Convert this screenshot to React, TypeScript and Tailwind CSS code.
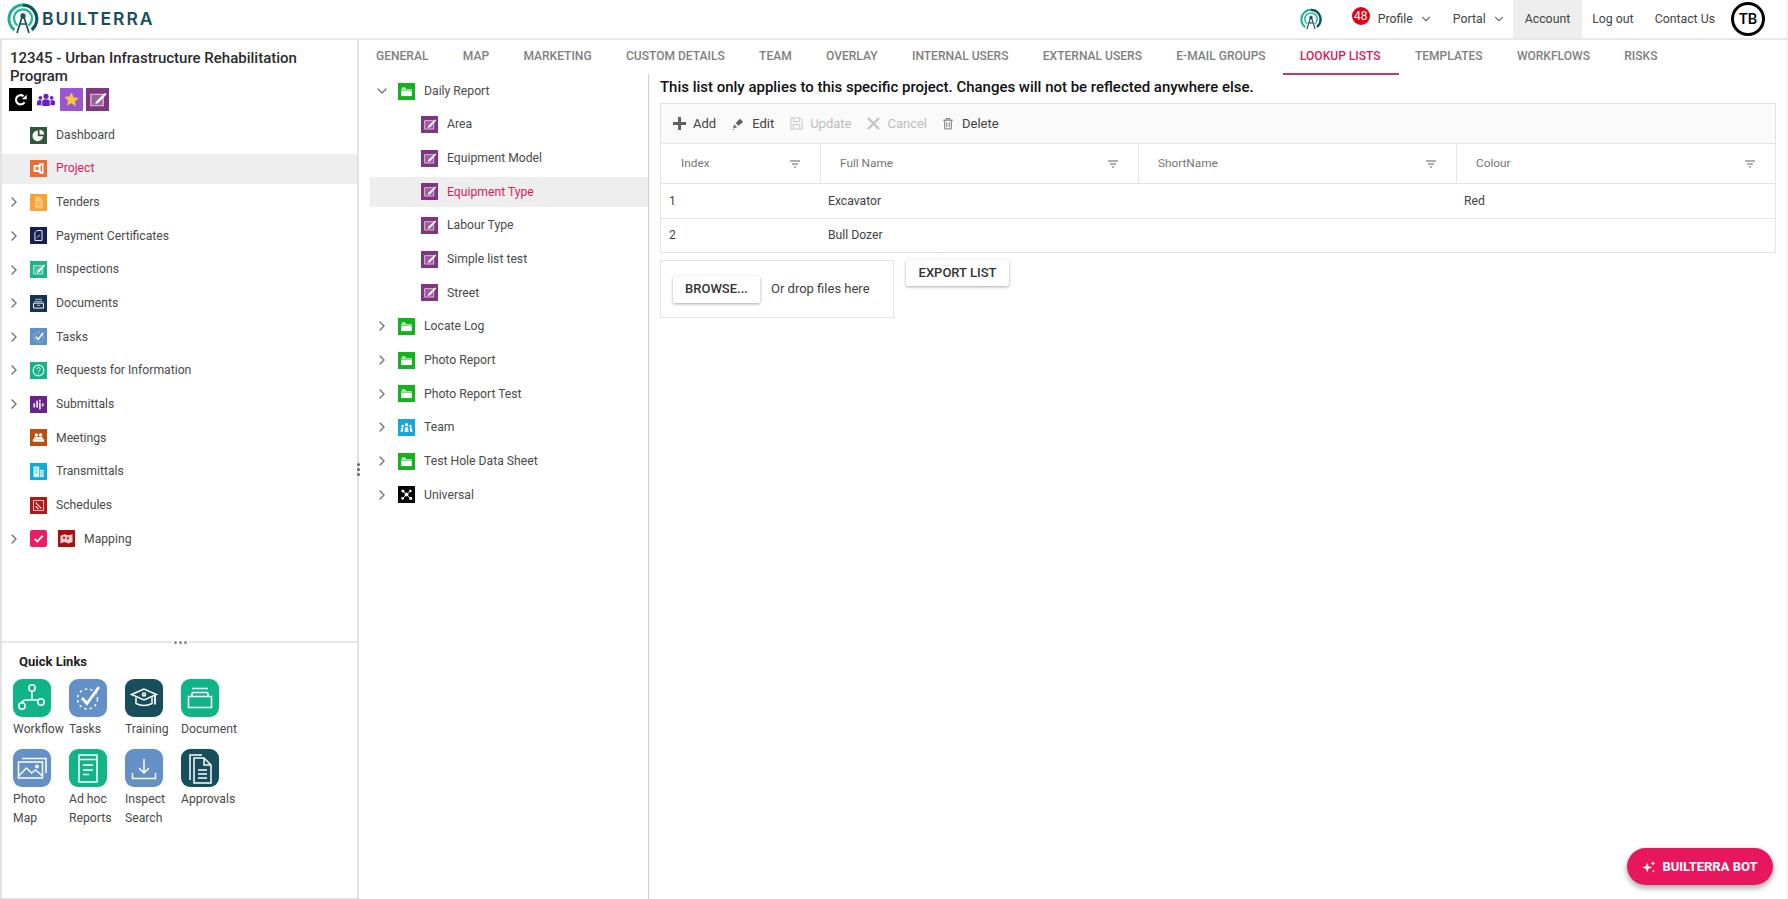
import React from 'react'
import { ChevronDown, ChevronRight } from 'lucide-react'

type IconName =
  | 'pie' | 'office' | 'doc' | 'docOutline' | 'edit' | 'inbox' | 'check' | 'help' | 'pulse'
  | 'meeting' | 'buildings' | 'schedule' | 'map' | 'folder' | 'team' | 'nodes' | 'tick' | 'refresh' | 'star'

const glyphs: Record<IconName, React.ReactNode> = {
  pie: <><path d="M11 5a7.500 7.500 0 1 0 7.500 8H11z" fill="#fff" /><path d="M13.500 4v6.500H20A7 7 0 0 0 13.500 4z" fill="#fff" /></>,
  office: <><path d="M13 5l6-1v16l-6-1z" fill="#fff" /><rect x="5" y="7" width="10" height="10" rx="1" fill="#fff" /><rect x="8" y="10" width="4" height="4" fill="#ee6c2f" /><rect x="15" y="8" width="2" height="8" fill="#ee6c2f" /></>,
  doc: <><path d="M7 4h7l4 4v12H7z" fill="#f9c27e" /><path d="M9.500 12h6M9.500 15h6" stroke="#f5a331" strokeWidth="1.200" /></>,
  docOutline: <><path d="M10 5h7v14H7V8z" fill="none" stroke="#fff" strokeWidth="1.300" /><path d="M10 15l4-4" stroke="#fff" strokeWidth="1.300" /></>,
  edit: <><path d="M5 6.500h13v12H5z" fill="#fff" fillOpacity=".22" stroke="#fff" strokeOpacity=".7" strokeWidth="1.200" /><path d="M20 5L11 13.500l-1.500 3.500 3.500-1.500L21.500 6.500z" fill="#fff" /></>,
  inbox: <><path d="M7 6h10M6 9h12" stroke="#c7d6e2" strokeWidth="1.200" /><path d="M5 11.500h14v7H5z" fill="none" stroke="#fff" strokeWidth="1.400" /><path d="M9.500 14.500h5" stroke="#fff" /></>,
  check: <><circle cx="12" cy="13" r="7" fill="none" stroke="#fff" strokeOpacity=".6" strokeDasharray="2 2" strokeWidth="1.300" /><path d="M8 12.500l3.500 3.500L18.500 7" fill="none" stroke="#fff" strokeWidth="2.200" /></>,
  help: <><circle cx="12" cy="12" r="7.600" fill="none" stroke="#fff" strokeWidth="1.500" /><path d="M9.800 10a2.300 2.300 0 1 1 3.400 2c-.8.500-1.200 1-1.200 2" fill="none" stroke="#fff" strokeWidth="1.300" /><circle cx="12" cy="16.300" r=".8" fill="#fff" /></>,
  pulse: <path d="M6 11v4M10 7.500v8M14 10v8M14 6v1M18 11.500v2" stroke="#fff" strokeOpacity=".9" strokeWidth="2.400" strokeLinecap="round" />,
  meeting: <><circle cx="9" cy="8.500" r="2.500" fill="#fff" /><circle cx="15" cy="8.500" r="2.500" fill="#fff" /><path d="M6 11.500h12v3H6z" fill="#fff" /><path d="M4 14.500h16v3.500H4z" fill="#fff" /></>,
  buildings: <><path d="M5 5h8v15H5z" fill="#fff" fillOpacity=".9" /><path d="M14 9.500h5.500V20H14z" fill="#fff" fillOpacity=".75" /><path d="M7 8h4M7 11h4M7 14h4M15.500 12.500h2.500M15.500 15.500h2.500" stroke="#12a9d8" /></>,
  schedule: <><path d="M5 5h14v14H5z" fill="none" stroke="#fff" strokeOpacity=".8" strokeWidth="1.300" /><path d="M8 8l8 8M8 13l4 4" stroke="#fff" strokeWidth="1.500" /></>,
  map: <><path d="M3.500 8l5.500-2 6 1.500 5.500-1.500v11l-5.500 2-6-2-5.500 2z" fill="#fff" fillOpacity=".8" /><path d="M7 9.500h3v3H7zM13 9l3 2.500-3 2.500z" fill="#a80f0f" /></>,
  folder: <><path d="M5.500 8V6.500h4.500L11.500 8z" fill="#fff" /><path d="M4.500 9h15v9.500h-15z" fill="#fff" /><path d="M4.500 10.500h15" stroke="#14b21f" strokeWidth=".8" /></>,
  team: <><circle cx="12" cy="8" r="2.200" fill="#fff" /><circle cx="6.500" cy="10" r="1.800" fill="#fff" /><circle cx="17.500" cy="10" r="1.800" fill="#fff" /><path d="M9 18l1-6.500h4l1 6.500zM3.500 18l1-6h3l-.5 6zM20.500 18l-1-6h-3l.5 6z" fill="#fff" /></>,
  nodes: <><circle cx="7" cy="7" r="2.200" fill="#fff" /><circle cx="17.500" cy="7" r="1.800" fill="#fff" /><circle cx="12" cy="12" r="2.800" fill="#fff" /><circle cx="6.500" cy="17.500" r="1.800" fill="#fff" /><circle cx="18" cy="17.500" r="2.200" fill="#fff" /><path d="M7 7l11 11M17.500 7L6.500 17.500" stroke="#fff" strokeWidth="1.200" /></>,
  tick: <path d="M6.500 12.500l3.800 3.800 7.500-8" fill="none" stroke="#fff" strokeWidth="2.600" />,
  refresh: <><path d="M16.200 14.800a4.800 4.800 0 1 1-1-6.200" fill="none" stroke="#fff" strokeWidth="2.200" /><path d="M13.300 11.800h5.200V7z" fill="#fff" /></>,
  star: <path d="M12 5l2.300 4.700 5.200.8-3.800 3.600.9 5.200L12 16l-4.600 2.300.9-5.200-3.800-3.600 5.200-.8z" fill="#f7c63c" />,
}

const Tile = ({ icon, bg, size = 'w-[17px] h-[17px]' }: { icon: IconName; bg: string; size?: string }) => (
  <span className={`${size} ${bg} shrink-0 flex items-center justify-center`}>
    <svg viewBox="0 0 24 24" className="w-full h-full">{glyphs[icon]}</svg>
  </span>
)

const navItems: { label: string; icon: IconName; bg: string; arrow?: boolean; active?: boolean }[] = [
  { label: 'Dashboard', icon: 'pie', bg: 'bg-[#33573c]' },
  { label: 'Project', icon: 'office', bg: 'bg-[#ee6c2f]', active: true },
  { label: 'Tenders', icon: 'doc', bg: 'bg-[#f5a331]', arrow: true },
  { label: 'Payment Certificates', icon: 'docOutline', bg: 'bg-[#14204f]', arrow: true },
  { label: 'Inspections', icon: 'edit', bg: 'bg-[#1db587]', arrow: true },
  { label: 'Documents', icon: 'inbox', bg: 'bg-[#14344f]', arrow: true },
  { label: 'Tasks', icon: 'check', bg: 'bg-[#6090c8]', arrow: true },
  { label: 'Requests for Information', icon: 'help', bg: 'bg-[#14b48a]', arrow: true },
  { label: 'Submittals', icon: 'pulse', bg: 'bg-[#6a2388]', arrow: true },
  { label: 'Meetings', icon: 'meeting', bg: 'bg-[#b8500f]' },
  { label: 'Transmittals', icon: 'buildings', bg: 'bg-[#12a9d8]' },
  { label: 'Schedules', icon: 'schedule', bg: 'bg-[#b01818]' },
]

const treeItems: { label: string; icon: IconName; bg: string; child?: boolean; open?: boolean; active?: boolean }[] = [
  { label: 'Daily Report', icon: 'folder', bg: 'bg-[#14b21f]', open: true },
  { label: 'Area', icon: 'edit', bg: 'bg-[#7f3580]', child: true },
  { label: 'Equipment Model', icon: 'edit', bg: 'bg-[#7f3580]', child: true },
  { label: 'Equipment Type', icon: 'edit', bg: 'bg-[#7f3580]', child: true, active: true },
  { label: 'Labour Type', icon: 'edit', bg: 'bg-[#7f3580]', child: true },
  { label: 'Simple list test', icon: 'edit', bg: 'bg-[#7f3580]', child: true },
  { label: 'Street', icon: 'edit', bg: 'bg-[#7f3580]', child: true },
  { label: 'Locate Log', icon: 'folder', bg: 'bg-[#14b21f]' },
  { label: 'Photo Report', icon: 'folder', bg: 'bg-[#14b21f]' },
  { label: 'Photo Report Test', icon: 'folder', bg: 'bg-[#14b21f]' },
  { label: 'Team', icon: 'team', bg: 'bg-[#12a9d8]' },
  { label: 'Test Hole Data Sheet', icon: 'folder', bg: 'bg-[#14b21f]' },
  { label: 'Universal', icon: 'nodes', bg: 'bg-black' },
]

const quick: { label: string; bg: string; icon: React.ReactNode }[] = [
  {
    label: 'Workflow', bg: 'bg-[#10b486]',
    icon: <><circle cx="19" cy="9" r="3.200" /><circle cx="9" cy="27" r="3.200" /><circle cx="28" cy="23" r="3.200" /><path d="M19 12.200V21H25M19 21H13.500Q9 21 9 23.800" /></>,
  },
  {
    label: 'Tasks', bg: 'bg-[#6390c6]',
    icon: <><circle cx="18.500" cy="20" r="10" strokeDasharray="2.500 3" /><path d="M13 19l5 5.500L30 8" strokeWidth="2.800" /></>,
  },
  {
    label: 'Training', bg: 'bg-[#174e5c]',
    icon: <><path d="M19 10L6.500 15.500 19 21l12.500-5.500z" /><path d="M11 18.500v6q8 4 16 0v-6" /><circle cx="19" cy="15.500" r="1.500" /><path d="M30 16.500v9" strokeWidth="1.800" /></>,
  },
  {
    label: 'Document', bg: 'bg-[#10b486]',
    icon: <><path d="M7.500 17.500h23v11h-23zM11 13.500v4M27 13.500v4M11 13.500h16M11 9.500h16M14 17.500h10" /></>,
  },
  {
    label: 'Photo Map', bg: 'bg-[#6390c6]',
    icon: <><path d="M5.500 13h24v16h-24z" /><path d="M9 9.500h24V24M5.500 27l8-8 5 5 4-3 7 6" /><circle cx="24" cy="17.500" r="1.200" /></>,
  },
  {
    label: 'Ad hoc Reports', bg: 'bg-[#10b486]',
    icon: <><path d="M10 6h18v27H10zM10 10.500h18M14 16h10M14 21h10M14 25.500h6" /></>,
  },
  {
    label: 'Inspect Search', bg: 'bg-[#6390c6]',
    icon: <><path d="M19 10v14M14 19l5 5 5-5M7.500 24v5.500h23V24" /></>,
  },
  {
    label: 'Approvals', bg: 'bg-[#174e5c]',
    icon: <><path d="M13 9h10l7 7v18H13zM23 9v7h7M17 21h9M17 25h9M17 29h9M9 31V6h12" /></>,
  },
]

const tabs = ['GENERAL', 'MAP', 'MARKETING', 'CUSTOM DETAILS', 'TEAM', 'OVERLAY', 'INTERNAL USERS', 'EXTERNAL USERS', 'E-MAIL GROUPS', 'LOOKUP LISTS', 'TEMPLATES', 'WORKFLOWS', 'RISKS']

const Logo = ({ small = false }: { small?: boolean }) => (
  <svg viewBox="0 0 32 32" className={small ? 'w-[22px] h-[23px]' : 'w-[32px] h-[32px]'} fill="none">
    <path d="M7.500 27A14 14 0 1 1 24.500 27" stroke="#1fae94" strokeWidth="3" />
    <path d="M16 2a14 14 0 0 1 9 24.500" stroke="#174e5c" strokeWidth="3" />
    <path d="M10.500 22.500A9 9 0 1 1 21.500 22.500" stroke="#2cb59b" strokeWidth="2.200" />
    <path d="M16 11l-6 19M16 11l6 19M12.500 21h7" stroke="#174e5c" strokeWidth="1.700" />
    <circle cx="16" cy="13" r="2" stroke="#174e5c" strokeWidth="1.300" />
  </svg>
)

const FilterIcon = () => (
  <svg viewBox="0 0 10 8" className="w-[10px] h-[8px] ml-auto" stroke="#616161" strokeWidth="1.200">
    <path d="M0 1h10M2 4h6M4 7h2" />
  </svg>
)

const Arrow = ({ open = false }: { open?: boolean }) =>
  open ? <ChevronDown size={16} strokeWidth={2.200} color="#7a7a7a" /> : <ChevronRight size={16} strokeWidth={2.200} color="#7a7a7a" />

const Sidebar = () => (
  <aside className="relative w-[359px] shrink-0 flex flex-col border-x-2 border-[#e2e2e2]">
    <div className="h-[601px] pt-[9px]">
      <h1 className="px-2 text-[15px] leading-[18px] font-medium text-[#2b2b2b]">12345 - Urban Infrastructure Rehabilitation Program</h1>
      <div className="flex items-center mt-[3px] ml-[7px] h-[23px]">
        <Tile icon="refresh" bg="bg-black" size="w-[23px] h-[23px]" />
        <svg viewBox="0 0 24 18" className="w-[18px] h-[14px] ml-[5px] mr-[5px]" fill="#6a1fc0">
          <circle cx="12" cy="4" r="3.500" /><circle cx="4.500" cy="6" r="2.500" /><circle cx="19.500" cy="6" r="2.500" />
          <path d="M7 17V11q0-3 5-3t5 3v6zM0 16v-4q0-3 4-3l2 1v6zM24 16v-4q0-3-4-3l-2 1v6z" />
        </svg>
        <Tile icon="star" bg="bg-[#9a55d0]" size="w-[23px] h-[23px]" />
        <span className="ml-[3px]"><Tile icon="edit" bg="bg-[#7f3580]" size="w-[23px] h-[23px]" /></span>
      </div>
      <nav className="mt-[9px] flex flex-col gap-[3.650px] text-[12.200px] text-[#4a4a4a]">
        {navItems.map((item) => (
          <div key={item.label} className={`h-[30px] flex items-center ${item.active ? 'bg-[#eeeeee] text-[#d81b60]' : ''}`}>
            <span className="w-[28px] flex pl-[4px]">
              {item.arrow && <Arrow />}
            </span>
            <Tile icon={item.icon} bg={item.bg} />
            <span className="ml-[9px]">{item.label}</span>
          </div>
        ))}
        <div className="h-[30px] flex items-center">
          <span className="w-[28px] flex pl-[4px]"><Arrow /></span>
          <Tile icon="tick" bg="bg-[#e91e63] rounded-[2px]" />
          <span className="ml-[11px]"><Tile icon="map" bg="bg-[#a80f0f]" /></span>
          <span className="ml-[9px]">Mapping</span>
        </div>
      </nav>
    </div>
    <div className="relative h-[2px] bg-[#e8e8e8]">
      <span className="absolute left-[170px] -top-[1px] px-[2px] h-[4px] items-center bg-white flex gap-[2px]">
        <i className="w-[3px] h-[3px] rounded-full bg-[#888]" />
        <i className="w-[3px] h-[3px] rounded-full bg-[#888]" />
        <i className="w-[3px] h-[3px] rounded-full bg-[#888]" />
      </span>
    </div>
    <div className="flex-1 border-b border-[#e2e2e2]">
      <h2 className="ml-[17px] mt-[11px] text-[13px] leading-[16px] font-bold text-[#212121]">Quick Links</h2>
      <div className="ml-[11px] mt-[9px] grid grid-cols-[56px_56px_56px_56px] gap-y-[10px]">
        {quick.map((q) => (
          <div key={q.label} className="flex flex-col">
            <span className={`${q.bg} w-[38px] h-[38px] rounded-[9px] flex items-center justify-center`}>
              <svg viewBox="0 0 38 38" className="w-[38px] h-[38px]" fill="none" stroke="#fff" strokeWidth="1.500">{q.icon}</svg>
            </span>
            <span className="mt-[3px] w-[56px] text-[12.200px] leading-[19px] text-[#4a4a4a]">{q.label}</span>
          </div>
        ))}
      </div>
    </div>
    <span className="absolute -right-[3px] top-[423px] flex flex-col gap-[2px]">
      <i className="w-[3px] h-[3px] rounded-full bg-[#666]" />
      <i className="w-[3px] h-[3px] rounded-full bg-[#666]" />
      <i className="w-[3px] h-[3px] rounded-full bg-[#666]" />
    </span>
  </aside>
)

const Tree = () => (
  <div className="w-[290px] shrink-0 border-r border-[#cfcfcf] pl-[11px] pt-[2px] flex flex-col gap-[3.650px] text-[12.200px] text-[#4a4a4a]">
    {treeItems.map((item) => (
      <div key={item.label} className={`h-[30px] flex items-center ${item.active ? 'bg-[#eeeeee] text-[#d81b60]' : ''} ${item.child ? 'pl-[51px]' : 'pl-[4px]'}`}>
        {!item.child && (
          <span className="w-[24px] flex">
            <Arrow open={item.open} />
          </span>
        )}
        <Tile icon={item.icon} bg={item.bg} />
        <span className="ml-[9px]">{item.label}</span>
      </div>
    ))}
  </div>
)

const ToolButton = ({ label, icon, disabled = false, gap = 'gap-[7px]' }: { label: string; icon: React.ReactNode; disabled?: boolean; gap?: string }) => (
  <span className={`flex items-center ${gap} ${disabled ? 'text-[#bdbdbd]' : 'text-[#424242]'}`}>
    <span className="flex items-center justify-center">{icon}</span>
    {label}
  </span>
)

const columns = ['Index', 'Full Name', 'ShortName', 'Colour']

const LookupTable = () => (
  <div className="border border-[#e4e4e4] w-[1116px]">
    <div className="h-[40px] bg-[#fafafa] border-b border-[#e4e4e4] flex items-center gap-[16px] pl-[12px] text-[13px]">
      <ToolButton label="Add" icon={
        <svg viewBox="0 0 13 13" className="w-[13px] h-[13px]" fill="#616161"><path d="M5 0h3v5h5v3H8v5H5V8H0V5h5z" /></svg>
      } />
      <ToolButton label="Edit" icon={
        <svg viewBox="0 0 14 14" className="w-[13px] h-[13px]" fill="#616161"><path d="M8.500 2l3.500 3.500-5 4-3-3zM2.500 8l3 3-4.500 1zM1 13h1v1H1z" /></svg>
      } />
      <ToolButton disabled label="Update" icon={
        <svg viewBox="0 0 14 14" className="w-[13px] h-[13px]" fill="none" stroke="#c4c4c4"><path d="M1 1h10l2 2v10H1zM4 1v4h6V1M3.500 13V8h7v5" /></svg>
      } />
      <ToolButton disabled label="Cancel" icon={
        <svg viewBox="0 0 13 13" className="w-[13px] h-[13px]" fill="none" stroke="#c4c4c4" strokeWidth="2.400"><path d="M1 1l11 11M12 1L1 12" /></svg>
      } />
      <ToolButton gap="gap-[9px]" label="Delete" icon={
        <svg viewBox="0 0 12 14" className="w-[10px] h-[13px]" fill="none" stroke="#616161"><path d="M0 3h12M4 3V1h4v2M2 3v10.500h8V3M4.500 5.500v6M7.500 5.500v6" /></svg>
      } />
    </div>
    <div className="h-[40px] grid grid-cols-[159px_318px_318px_319px] border-b border-[#e4e4e4] text-[11.800px] text-[#757575]">
      {columns.map((c, i) => (
        <div key={c} className={`flex items-center pr-[20px] ${i > 0 ? 'border-l border-[#e4e4e4] pl-[19px]' : 'pl-[20px]'}`}>
          {c}
          <FilterIcon />
        </div>
      ))}
    </div>
    <div className="h-[35px] grid grid-cols-[159px_318px_318px_319px] items-center border-b border-[#e4e4e4] text-[12.200px] text-[#424242]">
      <span className="pl-2">1</span><span className="pl-2">Excavator</span><span /><span className="pl-2">Red</span>
    </div>
    <div className="h-[33px] grid grid-cols-[159px_318px_318px_319px] items-center text-[12.200px] text-[#424242]">
      <span className="pl-2">2</span><span className="pl-2">Bull Dozer</span><span /><span />
    </div>
  </div>
)

export default function App() {
  return (
    <div className="h-[899px] w-[1788px] overflow-hidden flex flex-col bg-white font-['Roboto',sans-serif] relative border-r border-[#e8e8e8]">
      <header className="h-[40px] shrink-0 border-b-2 border-[#e8e8e8] flex items-center text-[12.300px] text-[#424242]">
        <div className="flex items-center ml-[7px]">
          <Logo />
          <span className="ml-[3px] text-[17.500px] font-semibold tracking-[1.900px] text-[#174e5c] font-['Inter',sans-serif]">BUILTERRA</span>
        </div>
        <div className="ml-auto flex items-center h-full">
          <Logo small />
          <span className="ml-[30px] w-[18px] h-[18px] rounded-full bg-[#e60012] text-white text-[12px] leading-[18px] text-center -mt-[7px]">48</span>
          <span className="ml-[8px]">Profile</span>
          <ChevronDown size={14} color="#757575" className="ml-[6px]" />
          <span className="ml-[20px]">Portal</span>
          <ChevronDown size={14} color="#757575" className="ml-[6px]" />
          <span className="ml-[7px] h-full px-[12px] bg-[#eeeeee] flex items-center">Account</span>
          <span className="ml-[10px]">Log out</span>
          <span className="ml-[21px]">Contact Us</span>
          <span className="ml-[16px] mr-[22px] w-[34px] h-[34px] rounded-full border-[3px] border-black flex items-center justify-center text-[15px] font-medium text-black">TB</span>
        </div>
      </header>
      <div className="flex-1 flex min-h-0">
        <Sidebar />
        <div className="flex-1 flex flex-col min-w-0">
          <nav className="h-[34px] shrink-0 flex pl-[17px] gap-[34.300px] text-[12.050px] font-medium text-[#808080]">
            {tabs.map((t) => (
              <span key={t} className={`relative h-full flex items-center pb-[2px] ${t === 'LOOKUP LISTS' ? 'text-[#d81b60]' : ''}`}>
                {t}
                {t === 'LOOKUP LISTS' && <i className="absolute -left-[17px] -right-[18px] bottom-[-1px] h-[2px] bg-[#c2386f]" />}
              </span>
            ))}
          </nav>
          <div className="flex-1 flex min-h-0">
            <Tree />
            <main className="flex-1 pl-[11px]">
              <p className="mt-[3px] h-[26px] text-[14.970px] leading-[20px] font-medium text-[#111]">This list only applies to this specific project. Changes will not be reflected anywhere else.</p>
              <LookupTable />
              <div className="mt-[7px] flex items-start gap-[12px]">
                <div className="w-[234px] h-[58px] border border-[#e4e4e4] flex items-center pl-[12px] text-[13px] text-[#424242]">
                  <button className="w-[87px] h-[27px] rounded-[2px] shadow-[0_1px_3px_rgba(0,0,0,0.35)] text-[13px] font-medium text-[#333]">BROWSE...</button>
                  <span className="ml-[11px]">Or drop files here</span>
                </div>
                <button className="w-[103px] h-[26px] rounded-[2px] shadow-[0_1px_3px_rgba(0,0,0,0.35)] text-[13px] font-medium text-[#333]">EXPORT LIST</button>
              </div>
            </main>
          </div>
        </div>
      </div>
      <button className="absolute right-[14px] bottom-[14px] w-[146px] h-[37px] rounded-full bg-[#e8175d] text-white text-[13px] font-bold flex items-center justify-center gap-[6px] shadow-[0_3px_6px_rgba(0,0,0,0.35)]">
        <svg viewBox="0 0 16 16" className="w-[14px] h-[14px]" fill="#fff">
          <path d="M6 3l1.500 4L12 8.500 7.500 10 6 14l-1.500-4L0 8.500 4.500 7zM12.500 1l.8 2 2 .8-2 .8-.8 2-.8-2-2-.8 2-.8zM13 11l.5 1.200 1.200.5-1.200.5-.5 1.200-.5-1.200-1.200-.5 1.200-.5z" />
        </svg>
        BUILTERRA BOT
      </button>
    </div>
  )
}
